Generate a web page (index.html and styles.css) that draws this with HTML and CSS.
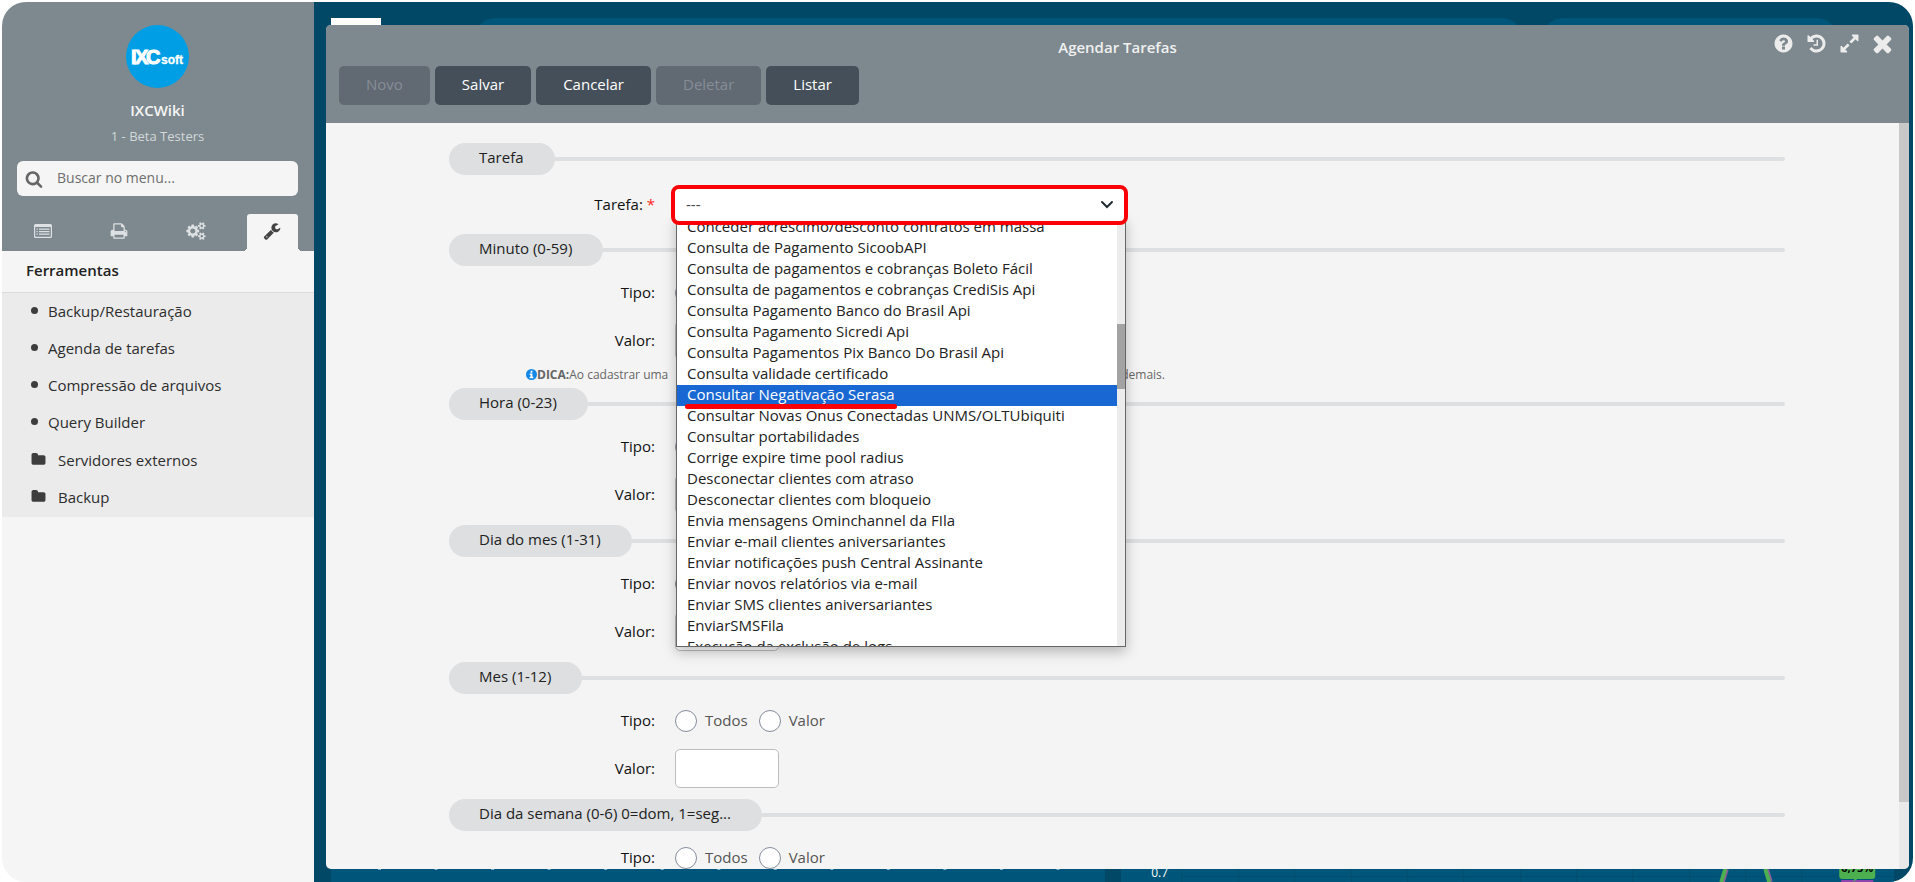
FILE: index.html
```html
<!DOCTYPE html>
<html lang="pt-BR">
<head>
<meta charset="utf-8">
<title>Agendar Tarefas</title>
<link rel="stylesheet" href="styles.css">
</head>
<body>
<div class="app">
  <aside class="sidebar">
    <header class="profile">
      <svg class="logo" viewBox="0 0 63 63" role="img" aria-label="IXCsoft">
        <circle cx="31.5" cy="31.5" r="31.5" fill="#009fe5"/>
        <g fill="#fff" stroke="#fff" font-family="Liberation Sans, sans-serif" font-weight="bold">
          <text y="39" x="5 9 20" font-size="20" stroke-width="1">IXC</text>
          <text y="39" x="35" font-size="12" stroke-width="0.300">soft</text>
        </g>
      </svg>
      <strong class="user">IXCWiki</strong>
      <span class="company">1 - Beta Testers</span>
      <label class="search">
        <svg class="icon" viewBox="0 0 1792 1792"><path d="M1216 832q0-185-131.5-316.5t-316.5-131.5-316.5 131.5-131.5 316.5 131.5 316.5 316.5 131.5 316.5-131.5 131.5-316.5zm512 832q0 52-38 90t-90 38q-54 0-90-38l-343-342q-179 124-399 124-143 0-273.5-55.5t-225-150-150-225-55.5-273.5 55.5-273.5 150-225 225-150 273.5-55.5 273.5 55.5 225 150 150 225 55.5 273.5q0 220-124 399l343 343q37 37 37 90z"/></svg>
        <input type="text" placeholder="Buscar no menu..." aria-label="Buscar no menu">
      </label>
      <nav class="tabs">
        <button class="tab" aria-label="Cadastros"><svg class="icon" viewBox="0 0 18 18"><path fill-rule="evenodd" d="M1.500 2h15A1.500 1.500 0 0 1 18 3.500v11a1.500 1.500 0 0 1-1.500 1.500h-15A1.500 1.500 0 0 1 0 14.500v-11A1.500 1.500 0 0 1 1.500 2zM1.200 5v9.300q0 .5.500.5h14.600q.5 0 .5-.5V5zM2.500 6.500h1.300v1.200H2.500zm2.500 0h10.500v1.200H5zM2.500 9h1.300v1.200H2.500zM5 9h10.500v1.200H5zm-2.500 2.500h1.300v1.200H2.500zm2.500 0h10.500v1.200H5z"/></svg></button>
        <button class="tab" aria-label="Impressão"><svg class="icon" viewBox="0 0 1792 1792"><path d="M448 1536h896v-256h-896v256zm0-640h896v-384h-160q-40 0-68-28t-28-68v-160h-640v640zm1152 64q0-26-19-45t-45-19-45 19-19 45 19 45 45 19 45-19 19-45zm128 0v416q0 13-9.500 22.500t-22.500 9.500h-224v160q0 40-28 68t-68 28h-960q-40 0-68-28t-28-68v-160h-224q-13 0-22.500-9.500t-9.500-22.500v-416q0-79 56.500-135.500t135.500-56.500h64v-544q0-40 28-68t68-28h672q40 0 88 20t76 48l152 152q28 28 48 76t20 88v256h64q79 0 135.500 56.500t56.500 135.500z"/></svg></button>
        <button class="tab" aria-label="Configurações"><svg class="icon icon-wide" viewBox="0 0 1920 1792"><path d="M896 896q0-106-75-181t-181-75-181 75-75 181 75 181 181 75 181-75 75-181zm768 512q0-52-38-90t-90-38-90 38-38 90q0 53 37.500 90.500t90.500 37.500 90.500-37.500 37.500-90.500zm0-1024q0-52-38-90t-90-38-90 38-38 90q0 53 37.500 90.500t90.500 37.500 90.500-37.500 37.500-90.500zm-384 421v185q0 10-7 19.500t-16 10.500l-155 24q-11 35-32 76 34 48 90 115 7 11 7 20 0 12-7 19-23 30-82.500 89.500t-78.500 59.500q-11 0-21-7l-115-90q-37 19-77 31-11 108-23 155-7 24-30 24h-186q-11 0-20-7.500t-10-17.500l-23-153q-34-10-75-31l-118 89q-7 7-20 7-11 0-21-8-144-133-144-160 0-9 7-19 10-14 41-53t47-61q-23-44-35-82l-152-24q-10-1-17-9.500t-7-19.500v-185q0-10 7-19.500t16-10.500l155-24q11-35 32-76-34-48-90-115-7-11-7-20 0-12 7-20 22-30 82-89t79-59q11 0 21 7l115 90q34-18 77-32 11-108 23-154 7-24 30-24h186q11 0 20 7.500t10 17.500l23 153q34 10 75 31l118-89q8-7 20-7 11 0 21 8 144 133 144 160 0 8-7 19-12 16-42 54t-45 60q23 48 34 82l152 23q10 2 17 10.500t7 19.500zm640 533v140q0 16-149 31-12 27-30 52 51 113 51 138 0 4-4 7-122 71-124 71-8 0-46-47t-52-68q-20 2-30 2t-30-2q-14 21-52 68t-46 47q-2 0-124-71-4-3-4-7 0-25 51-138-18-25-30-52-149-15-149-31v-140q0-16 149-31 13-29 30-52-51-113-51-138 0-4 4-7 4-2 35-20t59-34 30-16q8 0 46 46.500t52 67.500q20-2 30-2t30 2q51-71 92-112l6-2q4 0 124 70 4 3 4 7 0 25-51 138 17 23 30 52 149 15 149 31zm0-1024v140q0 16-149 31-12 27-30 52 51 113 51 138 0 4-4 7-122 71-124 71-8 0-46-47t-52-68q-20 2-30 2t-30-2q-14 21-52 68t-46 47q-2 0-124-71-4-3-4-7 0-25 51-138-18-25-30-52-149-15-149-31v-140q0-16 149-31 13-29 30-52-51-113-51-138 0-4 4-7 4-2 35-20t59-34 30-16q8 0 46 46.500t52 67.500q20-2 30-2t30 2q51-71 92-112l6-2q4 0 124 70 4 3 4 7 0 25-51 138 17 23 30 52 149 15 149 31z"/></svg></button>
        <button class="tab tab-active" aria-label="Ferramentas"><svg class="icon" viewBox="0 0 1792 1792"><path d="M448 1472q0-26-19-45t-45-19-45 19-19 45 19 45 45 19 45-19 19-45zm644-420l-682 682q-37 37-90 37-52 0-91-37l-106-108q-38-36-38-90 0-53 38-91l681-681q39 98 114.500 173.500t173.500 114.500zm634-435q0 39-23 106-47 134-164.500 217.500t-258.500 83.500q-185 0-316.500-131.500t-131.500-316.500 131.500-316.500 316.500-131.500q58 0 121.500 16.500t107.500 46.500q16 11 16 28t-16 28l-293 169v224l193 107q5-3 79-48.500t135.500-81 70.500-35.500q15 0 23.500 10t8.500 25z"/></svg></button>
      </nav>
    </header>
    <h2 class="menu-title">Ferramentas</h2>
    <ul class="menu">
      <li><a href="#"><i class="dot"></i>Backup/Restauração</a></li>
      <li><a href="#"><i class="dot"></i>Agenda de tarefas</a></li>
      <li><a href="#"><i class="dot"></i>Compressão de arquivos</a></li>
      <li><a href="#"><i class="dot"></i>Query Builder</a></li>
      <li><a href="#" class="folder"><svg class="icon-folder" viewBox="0 0 1792 1792"><path d="M1728 608v704q0 92-66 158t-158 66h-1216q-92 0-158-66t-66-158v-960q0-92 66-158t158-66h320q92 0 158 66t66 158v32h672q92 0 158 66t66 158z"/></svg>Servidores externos</a></li>
      <li><a href="#" class="folder"><svg class="icon-folder" viewBox="0 0 1792 1792"><path d="M1728 608v704q0 92-66 158t-158 66h-1216q-92 0-158-66t-66-158v-960q0-92 66-158t158-66h320q92 0 158 66t66 158v32h672q92 0 158 66t66 158z"/></svg>Backup</a></li>
    </ul>
  </aside>

  <main class="workspace">
    <div class="dashboard">
      <div class="dash-top">
        <span class="dash-logo"></span>
        <span class="dash-bar dash-bar-main"></span>
        <span class="dash-bar"></span>
      </div>
      <div class="dash-bottom">
        <svg class="chart" viewBox="0 0 773 16" preserveAspectRatio="none"><path d="M47 3.500H750" stroke="#7fb3c8" stroke-width="1" stroke-dasharray="3 53.500"/></svg>
        <svg class="chart" viewBox="0 0 773 16">
          <path d="M60.500 0V16M117.500 0V16M173.500 0V16M230.500 0V16M286.500 0V16M342.500 0V16M399.500 0V16M455.500 0V16M511.500 0V16M568.500 0V16M624.500 0V16M680.500 0V16M737.500 0V16M60 10.500H773" stroke="#004f70" fill="none"/>
          <path d="M601 16L605 3M645 3L649 16" stroke="#8e5a9c" stroke-width="5"/>
          <path d="M600 16L604 3M644 3L648 16" stroke="#4caf50" stroke-width="4"/>
          <path d="M720 14h32v2h-32z" fill="#8e44ad"/>
          <path d="M718 0h36v10q0 3-3 3h-15l-4 3 1-3h-12q-3 0-3-3z" fill="#4caf50"/>
          <text x="30" y="11" font-size="12" fill="#fff">0.7</text>
          <text x="736" y="6" font-size="11" font-weight="bold" text-anchor="middle" fill="#000">0,75%</text>
        </svg>
      </div>
    </div>

    <section class="modal">
      <header class="modal-head">
        <h1 class="modal-title">Agendar Tarefas</h1>
        <div class="window-actions">
          <button aria-label="Ajuda"><svg viewBox="0 0 1792 1792"><path d="M1024 1376v-192q0-14-9-23t-23-9h-192q-14 0-23 9t-9 23v192q0 14 9 23t23 9h192q14 0 23-9t9-23zm256-672q0-88-55.500-163t-138.500-116-170-41q-243 0-371 213-15 24 8 42l132 100q7 6 19 6 16 0 25-12 53-68 86-92 34-24 86-24 48 0 85.500 26t37.500 59q0 38-20 61t-68 45q-63 28-115.500 86.500t-52.500 125.500v36q0 14 9 23t23 9h192q14 0 23-9t9-23q0-19 21.500-49.500t54.500-49.500q32-18 49-28.500t46-35 44.500-48 28-60.500 12.500-81zm384 192q0 209-103 385.500t-279.500 279.500-385.500 103-385.500-103-279.500-279.500-103-385.500 103-385.500 279.500-279.500 385.500-103 385.500 103 279.500 279.500 103 385.500z"/></svg></button>
          <button aria-label="Histórico"><svg viewBox="0 0 1792 1792"><path d="M1664 896q0 156-61 298t-164 245-245 164-298 61q-172 0-327-72.500t-264-204.500q-7-10-6.500-22.500t8.500-20.500l137-138q10-9 25-9 16 2 23 12 73 95 179 147t225 52q104 0 198.500-40.500t163.500-109.500 109.500-163.500 40.500-198.500-40.500-198.500-109.500-163.500-163.500-109.500-198.500-40.500q-98 0-188 35.500t-160 101.500l137 138q31 30 14 69-17 40-59 40h-448q-26 0-45-19t-19-45v-448q0-42 40-59 39-17 69 14l130 129q107-101 244.500-156.500t284.500-55.500q156 0 298 61t245 164 164 245 61 298zm-640-288v448q0 14-9 23t-23 9h-320q-14 0-23-9t-9-23v-64q0-14 9-23t23-9h224v-352q0-14 9-23t23-9h64q14 0 23 9t9 23z"/></svg></button>
          <button aria-label="Expandir"><svg viewBox="0 0 1792 1792"><path d="M883 1056q0 13-10 23l-332 332 144 144q19 19 19 45t-19 45-45 19h-448q-26 0-45-19t-19-45v-448q0-26 19-45t45-19 45 19l144 144 332-332q10-10 23-10t23 10l114 114q10 10 10 23zm781-864v448q0 26-19 45t-45 19-45-19l-144-144-332 332q-10 10-23 10t-23-10l-114-114q-10-10-10-23t10-23l332-332-144-144q-19-19-19-45t19-45 45-19h448q26 0 45 19t19 45z"/></svg></button>
          <button aria-label="Fechar"><svg viewBox="192 192 1408 1408"><path d="M1490 1322q0 40-28 68l-136 136q-28 28-68 28t-68-28l-294-294-294 294q-28 28-68 28t-68-28l-136-136q-28-28-28-68t28-68l294-294-294-294q-28-28-28-68t28-68l136-136q28-28 68-28t68 28l294 294 294-294q28-28 68-28t68 28l136 136q28 28 28 68t-28 68l-294 294 294 294q28 28 28 68z"/></svg></button>
        </div>
        <div class="toolbar">
          <button class="btn" disabled>Novo</button>
          <button class="btn">Salvar</button>
          <button class="btn">Cancelar</button>
          <button class="btn" disabled>Deletar</button>
          <button class="btn">Listar</button>
        </div>
      </header>

      <div class="modal-body">
        <form class="form">
          <section>
            <h3 class="legend"><span>Tarefa</span></h3>
            <div class="row row-task">
              <label for="tarefa">Tarefa: <b class="required">*</b></label>
              <div class="combo">
                <select id="tarefa" class="select"><option>---</option></select>
                <svg class="chevron" viewBox="0 0 14 10"><path d="M2 2l5 5 5-5" fill="none" stroke="#222b33" stroke-width="2" stroke-linecap="round"/></svg>
                <div class="popup">
                  <ul class="options" role="listbox">
                    <li role="option">Conceder acréscimo/desconto contratos em massa</li>
                    <li role="option">Consulta de Pagamento SicoobAPI</li>
                    <li role="option">Consulta de pagamentos e cobranças Boleto Fácil</li>
                    <li role="option">Consulta de pagamentos e cobranças CrediSis Api</li>
                    <li role="option">Consulta Pagamento Banco do Brasil Api</li>
                    <li role="option">Consulta Pagamento Sicredi Api</li>
                    <li role="option">Consulta Pagamentos Pix Banco Do Brasil Api</li>
                    <li role="option">Consulta validade certificado</li>
                    <li role="option" aria-selected="true" class="selected"><span class="marked">Consultar Negativação Serasa</span></li>
                    <li role="option">Consultar Novas Onus Conectadas UNMS/OLTUbiquiti</li>
                    <li role="option">Consultar portabilidades</li>
                    <li role="option">Corrige expire time pool radius</li>
                    <li role="option">Desconectar clientes com atraso</li>
                    <li role="option">Desconectar clientes com bloqueio</li>
                    <li role="option">Envia mensagens Ominchannel da FIla</li>
                    <li role="option">Enviar e-mail clientes aniversariantes</li>
                    <li role="option">Enviar notificações push Central Assinante</li>
                    <li role="option">Enviar novos relatórios via e-mail</li>
                    <li role="option">Enviar SMS clientes aniversariantes</li>
                    <li role="option">EnviarSMSFila</li>
                    <li role="option">Execução da exclusão de logs</li>
                  </ul>
                  <div class="popup-track"><div class="popup-thumb"></div></div>
                </div>
              </div>
            </div>
          </section>

          <section>
            <h3 class="legend"><span>Minuto (0-59)</span></h3>
            <div class="row row-type" role="radiogroup" aria-labelledby="t1"><span id="t1" class="row-label">Tipo:</span>
              <div class="radios"><label><input type="radio" name="minuto">Todos</label><label><input type="radio" name="minuto">Valor</label></div></div>
            <div class="row"><label for="v1">Valor:</label><input id="v1" class="value" type="text"></div>
            <p class="hint"><span class="hint-start"><svg class="info" viewBox="0 0 12 12"><circle cx="6" cy="6" r="6" fill="#1388e8"/><path d="M5 2h2v2H5zM4 5h3v3.500h1V10H4V8.500h1v-2H4z" fill="#fff"/></svg><b>DICA:</b>Ao cadastrar uma</span><span>demais.</span></p>
          </section>

          <section>
            <h3 class="legend"><span>Hora (0-23)</span></h3>
            <div class="row row-type" role="radiogroup" aria-labelledby="t2"><span id="t2" class="row-label">Tipo:</span>
              <div class="radios"><label><input type="radio" name="hora">Todos</label><label><input type="radio" name="hora">Valor</label></div></div>
            <div class="row"><label for="v2">Valor:</label><input id="v2" class="value" type="text"></div>
          </section>

          <section>
            <h3 class="legend"><span>Dia do mes (1-31)</span></h3>
            <div class="row row-type" role="radiogroup" aria-labelledby="t3"><span id="t3" class="row-label">Tipo:</span>
              <div class="radios"><label><input type="radio" name="dia">Todos</label><label><input type="radio" name="dia">Valor</label></div></div>
            <div class="row"><label for="v3">Valor:</label><input id="v3" class="value" type="text"></div>
          </section>

          <section>
            <h3 class="legend"><span>Mes (1-12)</span></h3>
            <div class="row row-type" role="radiogroup" aria-labelledby="t4"><span id="t4" class="row-label">Tipo:</span>
              <div class="radios"><label><input type="radio" name="mes">Todos</label><label><input type="radio" name="mes">Valor</label></div></div>
            <div class="row"><label for="v4">Valor:</label><input id="v4" class="value" type="text"></div>
          </section>

          <section>
            <h3 class="legend"><span>Dia da semana (0-6) 0=dom, 1=seg...</span></h3>
            <div class="row row-type" role="radiogroup" aria-labelledby="t5"><span id="t5" class="row-label">Tipo:</span>
              <div class="radios"><label><input type="radio" name="semana">Todos</label><label><input type="radio" name="semana">Valor</label></div></div>
          </section>
        </form>
        <div class="scroll-track"><div class="scroll-thumb"></div></div>
      </div>
    </section>
  </main>
</div>
</body>
</html>
```

FILE: styles.css
```css
* { box-sizing: border-box; }

body {
  margin: 0;
  padding: 2px 2px 0;
  height: 100vh;
  background: #fff;
  color: #222;
  font: 15px/20px "Open Sans", sans-serif;
}

h1, h2, h3, p, ul { margin: 0; padding: 0; }
ul { list-style: none; }
button, input, select { font: inherit; }
button { border: 0; background: none; padding: 0; }
svg { display: block; flex: none; }

.app {
  display: grid;
  grid-template-columns: 312px 1fr;
  height: 100%;
  border-radius: 24px;
  overflow: hidden;
}

/* Sidebar */
.sidebar { background: #f5f5f5; }

.profile {
  display: flex;
  flex-direction: column;
  align-items: center;
  padding: 23px 16px 0 15px;
  background: #7d898e;
}
.logo { width: 63px; height: 63px; }
.user { margin-top: 12px; color: #f5f5f5; font-weight: 600; }
.company { margin-top: 6px; color: #d3d8da; font-size: 13px; }

.search {
  display: flex;
  align-items: center;
  align-self: stretch;
  gap: 12px;
  height: 35px;
  margin: 15px 0 18px;
  padding-left: 8px;
  border-radius: 6px;
  background: #f5f5f5;
  color: #666;
}
.search input {
  flex: 1;
  min-width: 0;
  padding: 0 2px 2px;
  border: 0;
  background: none;
  font-size: 14px;
}
.search input::placeholder { color: #6e6e6e; }

.icon { width: 18px; height: 18px; fill: currentColor; }
.icon-wide { width: 20px; }

.tabs {
  display: flex;
  justify-content: space-between;
  align-self: stretch;
}
.tab {
  display: grid;
  place-items: center;
  width: 51px;
  height: 37px;
  padding-bottom: 4px;
  color: #dde1e3;
}
.tab-active {
  position: relative;
  border-radius: 3px 3px 0 0;
  background: #f5f5f5;
  color: #444;
}
.tab-active::before,
.tab-active::after {
  content: "";
  position: absolute;
  bottom: 0;
  width: 4px;
  height: 4px;
}
.tab-active::before { right: 100%; background: radial-gradient(circle at 0 0, transparent 4px, #f5f5f5 4px); }
.tab-active::after { left: 100%; background: radial-gradient(circle at 100% 0, transparent 4px, #f5f5f5 4px); }

.menu-title {
  padding: 9px 24px 12px;
  border-bottom: 1px solid #dadcdc;
  font-size: 15px;
  font-weight: 600;
}
.menu { padding-bottom: 2px; background: #ebebeb; }
.menu a {
  display: flex;
  align-items: center;
  gap: 10px;
  height: 37px;
  padding: 0 0 2px 29px;
  color: #2d2d2d;
  text-decoration: none;
}
.dot { width: 7px; height: 7px; border-radius: 50%; background: #3d3d3d; }
.menu .folder { gap: 12px; padding-bottom: 0; }
.icon-folder { width: 15px; height: 15px; fill: #3d3d3d; }

/* Workspace */
.workspace {
  position: relative;
  display: grid;
  min-height: 0;
  padding: 23px 4px 13px 12px;
  background: #004865;
}
.dashboard {
  position: absolute;
  inset: 16px 19px 0 17px;
  display: flex;
  flex-direction: column;
  justify-content: space-between;
}
.dash-top { display: grid; grid-template-columns: 50px 1162px 294px; }
.dash-bar, .dash-logo { height: 40px; background: #00567a; }
.dash-logo { background: #fff; }
.dash-bar { border-radius: 24px; }
.dash-bar-main { margin: 0 21px 0 94px; }
.dash-bottom { display: grid; grid-template-columns: 1fr 1fr; gap: 16px; }
.chart { width: 100%; height: 16px; background: #00567a; }

/* Modal */
.modal {
  position: relative;
  display: flex;
  flex-direction: column;
  min-height: 0;
  border-radius: 5px;
  background: #f4f4f4;
  overflow: hidden;
}
.modal-head {
  display: grid;
  grid-template-columns: 130px 1fr 130px;
  padding: 8px 13px 18px;
  background: #7d898e;
}
.modal-title {
  grid-column: 2;
  padding: 4px 0 9px;
  color: #f0f0f0;
  font-size: 15px;
  font-weight: 600;
  text-align: center;
}
.window-actions {
  display: flex;
  align-items: flex-start;
  justify-content: flex-end;
  gap: 12px;
  padding-right: 3px;
}
.window-actions svg { width: 21px; height: 21px; fill: #ececec; }
.toolbar { grid-column: 1 / -1; display: flex; gap: 5px; }
.btn {
  height: 39px;
  padding: 0 27px 4px;
  border-radius: 5px;
  background: #454f59;
  color: #fff;
  font-weight: 500;
}
.btn:disabled { background: #616972; color: #868d98; }

.modal-body { display: flex; flex: 1; min-height: 0; }
.form { flex: 1; min-width: 0; padding: 20px 114px 0 123px; overflow: hidden; }
.scroll-track { width: 10px; background: #e9e9e9; }
.scroll-thumb { height: 91%; background: #c8c8c8; }

.legend {
  display: flex;
  align-items: center;
  font-size: 15px;
  font-weight: 500;
}
.legend span {
  height: 32px;
  padding: 4px 31px 0 30px;
  border-radius: 16px;
  background: #dddfe1;
}
.legend::after {
  content: "";
  flex: 1;
  height: 4px;
  border-radius: 0 2px 2px 0;
  background: #dedfe0;
}

.row {
  display: grid;
  grid-template-columns: 206px auto;
  justify-content: start;
  align-items: center;
  gap: 20px;
  padding-bottom: 11px;
}
.row > label, .row-label { padding-bottom: 2px; text-align: right; color: #111; }
.required { color: #f22; font-weight: 400; }
.row-task { padding: 14px 0 13px; }
.row-type { padding: 16px 0 17px; }

.radios { display: flex; gap: 11px; height: 22px; }
.radios label {
  display: flex;
  align-items: flex-start;
  gap: 8px;
  color: #555;
}
.radios input {
  appearance: none;
  width: 22px;
  height: 22px;
  margin: 0;
  border: 1px solid #858c9a;
  border-radius: 50%;
  background: #fff;
}
.value {
  width: 104px;
  height: 39px;
  border: 1px solid #bbbdc0;
  border-radius: 5px;
  background: #fff;
}

.hint {
  display: flex;
  justify-content: space-between;
  width: 639px;
  height: 17px;
  margin: -5px 0 5px 77px;
  color: #666;
  font-size: 12px;
  line-height: 17px;
}
.hint-start { display: flex; align-items: center; }
.info { width: 11px; height: 11px; }

/* Task combo */
.combo { position: relative; width: 449px; }
.select {
  appearance: none;
  position: relative;
  z-index: 2;
  display: block;
  width: 100%;
  height: 32px;
  padding: 0 11px 2px;
  border: 0;
  border-radius: 4px;
  outline: 4px solid #fb0007;
  background: #fff;
  color: #444;
}
.chevron {
  position: absolute;
  z-index: 3;
  top: 11px;
  right: 10px;
  width: 14px;
  height: 10px;
}
.popup {
  position: absolute;
  z-index: 1;
  top: 28px;
  left: 1px;
  display: flex;
  width: 450px;
  height: 430px;
  border: 1px solid #666;
  border-top: 0;
  background: #fff;
  box-shadow: 0 5px 12px rgba(0, 0, 0, .25);
  overflow: hidden;
}
.options { flex: 1; }
.options li { height: 21px; padding-left: 10px; line-height: 18px; }
.options .selected { background: #1967d2; color: #fff; }
.marked { position: relative; display: inline-block; }
.marked::after {
  content: "";
  position: absolute;
  left: -2px;
  right: -2px;
  bottom: -6px;
  height: 5px;
  border-radius: 3px;
  background: #fb0007;
}
.popup-track { width: 8px; padding-top: 107px; background: #ececec; }
.popup-thumb { height: 65px; background: #a3a3a3; }
```
